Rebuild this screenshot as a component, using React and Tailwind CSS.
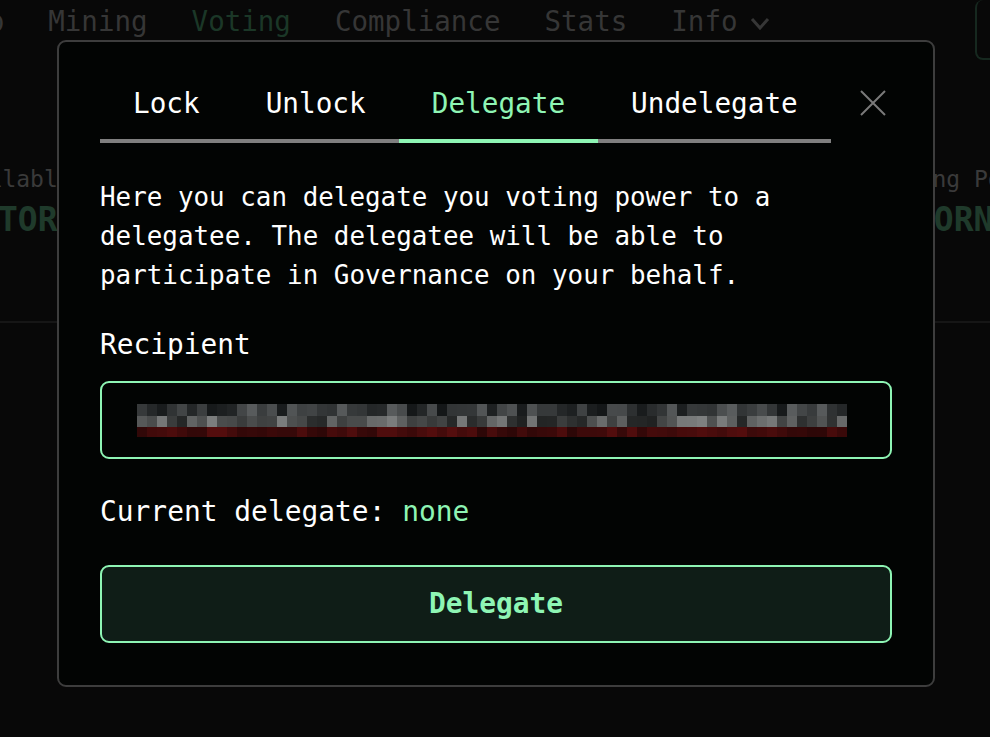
import React from "react";

const MONO = "font-['DejaVu_Sans_Mono','Liberation_Mono',monospace]";

const TABS = ["Lock", "Unlock", "Delegate", "Undelegate"];
const NAV = ["Swap", "Mining", "Voting", "Compliance", "Stats", "Info"];

// blurred-out address: a mosaic of grey / dark red cells
function Mosaic() {
  const cols = 71;
  let seed = 7;
  const rnd = () => {
    seed = (seed * 9301 + 49297) % 233280;
    return seed / 233280;
  };
  const cells = [];
  for (let c = 0; c < cols; c++) {
    const top = Math.floor(20 + rnd() * 70);
    const mid = Math.floor(30 + rnd() * 100);
    const red = Math.floor(45 + rnd() * 40);
    cells.push({ c, top, mid, red });
  }
  return (
    <svg width="710" height="33" viewBox="0 0 710 33" className="block">
      {cells.map(({ c, top, mid, red }) => (
        <g key={c}>
          <rect x={c * 10} y="0" width="10" height="12" fill={`rgb(${top},${top + 3},${top + 4})`} />
          <rect x={c * 10} y="12" width="10" height="11" fill={`rgb(${mid},${mid + 2},${mid + 2})`} />
          <rect x={c * 10} y="23" width="10" height="10" fill={`rgb(${red},${Math.floor(red / 6)},${Math.floor(red / 6)})`} />
        </g>
      ))}
    </svg>
  );
}

export default function App() {
  const active = "Delegate";

  return (
    <div className={`relative h-[737px] w-full overflow-hidden bg-[#080808] ${MONO}`}>
      {/* page behind the overlay */}
      <div className="flex h-[60px] items-start">
        <nav className="-ml-[62px] mt-[1px] flex items-center gap-[44px] text-[27.5px] leading-[40px] text-[#363636]">
          {NAV.map((n) => (
            <span key={n} className={n === "Voting" ? "text-[#1b3727]" : ""}>
              {n}
            </span>
          ))}
          <svg width="24" height="24" viewBox="0 0 24 24" className="-ml-[34px] mt-[4px]" fill="none" stroke="#363636" strokeWidth="3">
            <path d="M4 8l8 9 8-9" />
          </svg>
        </nav>
        <div className="ml-auto -mr-[40px] h-[60px] w-[55px] rounded-b-lg rounded-l-lg border-2 border-t-0 border-[#16281f]" />
      </div>

      <div className="mt-[104px] flex h-[159px] justify-between border-b-2 border-[#161616]">
        <div className="-ml-[53px]">
          <div className="text-[23px] leading-[30px] text-[#3a3a3a]">Available</div>
          <div className="mt-[6px] pl-[51px] text-[33px] font-bold leading-[40px] text-[#1f3a2b]">TORN</div>
        </div>
        <div className="-mr-[80px] w-[120px]">
          <div className="-ml-[73px] text-[23px] leading-[30px] text-[#3a3a3a]">Voting Power</div>
          <div className="mt-[6px] -ml-[36px] text-[33px] font-bold leading-[40px] text-[#1f3a2b]">TORN</div>
        </div>
      </div>

      {/* modal */}
      <div className="absolute left-[57px] top-[40px] w-[878px] rounded-[9px] border-2 border-[#3d3d3d] bg-[#020403] px-[41px] pb-[42px] pt-[42px] text-white">
        <div className="flex items-start">
          <div className="flex">
            {TABS.map((t) => (
              <button
                key={t}
                className={`border-b-4 px-[33px] pb-[15px] text-[27.7px] leading-[40px] ${
                  t === active ? "border-[#8ef5b4] text-[#8ef5b4]" : "border-[#7f7f7f] text-white"
                }`}
              >
                {t}
              </button>
            ))}
          </div>
          <svg width="28" height="28" viewBox="0 0 28 28" className="ml-[28px] mt-[5px]" stroke="#7a7a7a" strokeWidth="2">
            <path d="M2 2l24 24M26 2L2 26" />
          </svg>
        </div>

        <p className="mt-[35px] text-[25.9px] leading-[39px]">
          Here you can delegate you voting power to a delegatee. The delegatee will be able to participate in
          Governance on your behalf.
        </p>

        <div className="mt-[30px] text-[27.8px] leading-[39px]">Recipient</div>

        <div className="mt-[17px] flex h-[78px] items-center rounded-[9px] border-2 border-[#8ef5b4] pl-[35px]">
          <Mosaic />
        </div>

        <div className="mt-[33px] text-[27.9px] leading-[39px]">
          Current delegate: <span className="text-[#8ef5b4]">none</span>
        </div>

        <button className="mt-[34px] flex h-[78px] w-full items-center justify-center rounded-[9px] border-2 border-[#8ef5b4] bg-[#0f1d17] text-[27.8px] font-bold text-[#8ef5b4]">
          Delegate
        </button>
      </div>
    </div>
  );
}
